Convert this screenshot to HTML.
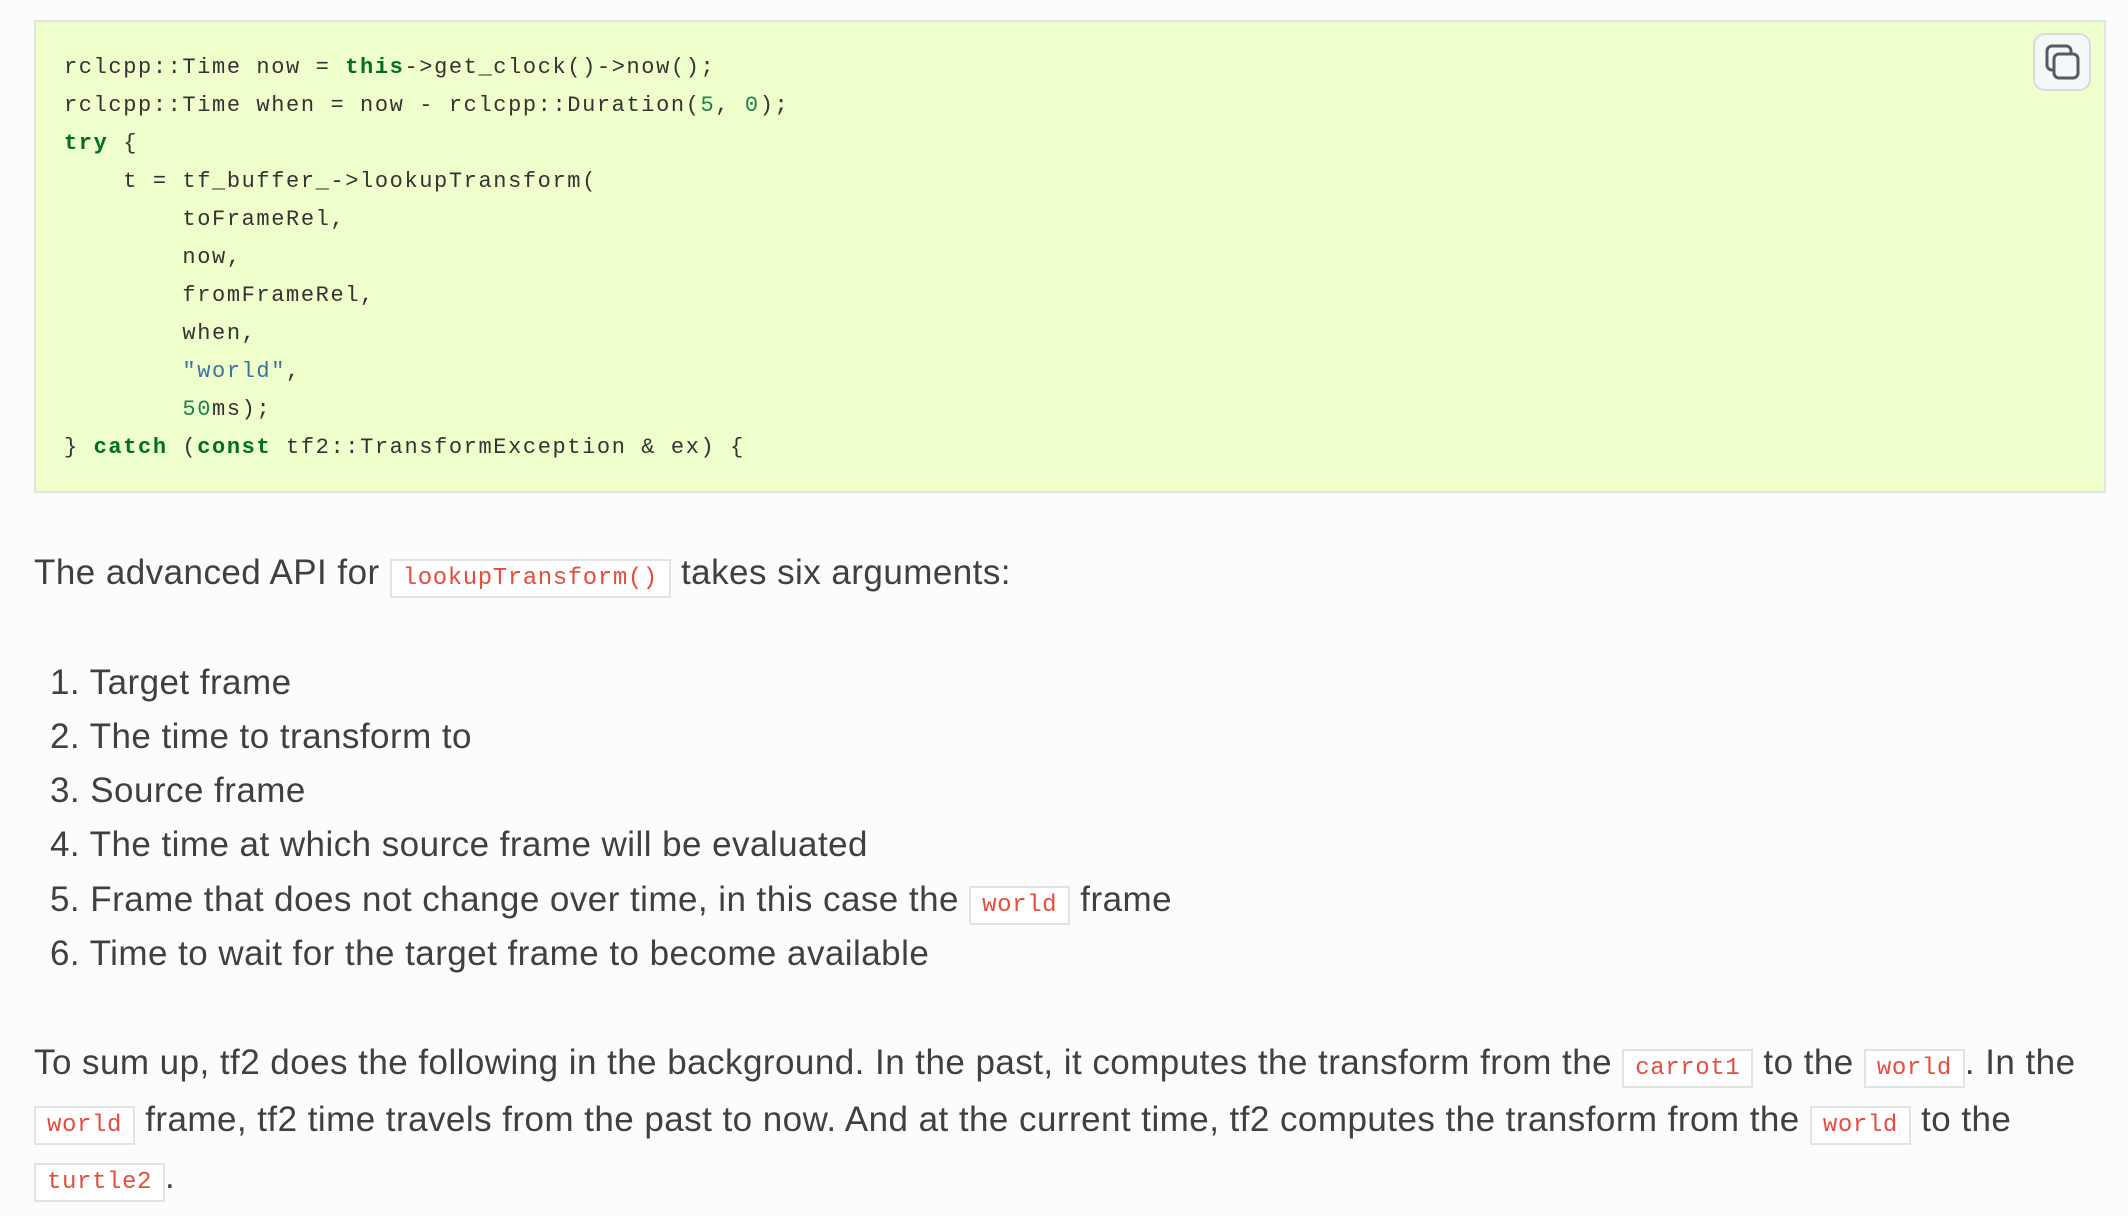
<!DOCTYPE html>
<html><head><meta charset="utf-8"><style>
html,body{margin:0;padding:0;background:#fcfcfc;width:2128px;height:1216px;overflow:hidden}
body{font-family:"Liberation Sans",sans-serif;color:#404040}
.code{position:absolute;left:34px;top:20px;width:2072px;height:473px;background:#eeffcc;border:2px solid #e1e4e5;box-sizing:border-box}
.cl{position:absolute;left:64px;font-family:"Liberation Mono",monospace;font-size:22px;letter-spacing:1.6px;color:#333;white-space:pre;line-height:38px}
.k{color:#007020;font-weight:bold}.n{color:#208050}.s{color:#4070a0}
.copy{position:absolute;left:2033px;top:33px;width:58px;height:58px;border:2px solid #d8dadd;border-radius:12px;background:#f6f7f9;box-sizing:border-box}
.t{position:absolute;font-size:35px;letter-spacing:0.45px;white-space:nowrap;line-height:50px}
code{font-family:"Liberation Mono",monospace;font-size:24px;color:#e74c3c;background:#fff;border:2px solid #e1e4e5;padding:4px 11px;letter-spacing:0.6px}
</style></head><body>
<div class="code"></div>
<div class="cl" style="top:49px">rclcpp::Time now = <span class="k">this</span>-&gt;get_clock()-&gt;now();</div>
<div class="cl" style="top:87px">rclcpp::Time when = now - rclcpp::Duration(<span class="n">5</span>, <span class="n">0</span>);</div>
<div class="cl" style="top:125px"><span class="k">try</span> {</div>
<div class="cl" style="top:163px">    t = tf_buffer_-&gt;lookupTransform(</div>
<div class="cl" style="top:201px">        toFrameRel,</div>
<div class="cl" style="top:239px">        now,</div>
<div class="cl" style="top:277px">        fromFrameRel,</div>
<div class="cl" style="top:315px">        when,</div>
<div class="cl" style="top:353px">        <span class="s">"world"</span>,</div>
<div class="cl" style="top:391px">        <span class="n">50</span>ms);</div>
<div class="cl" style="top:429px">} <span class="k">catch</span> (<span class="k">const</span> tf2::TransformException &amp; ex) {</div>
<div class="copy"><svg width="54" height="54" viewBox="0 0 54 54" style="position:absolute;left:0;top:0"><rect x="12" y="11" width="24" height="24" rx="5" fill="none" stroke="#555b63" stroke-width="3"/><rect x="19" y="19" width="24" height="24" rx="5" fill="#f6f7f9" stroke="#555b63" stroke-width="3"/></svg></div>
<div class="t" style="left:34px;top:548px">The advanced API for <code>lookupTransform()</code> takes six arguments:</div>
<div class="t" style="left:50px;top:658px">1. Target frame</div>
<div class="t" style="left:50px;top:712px">2. The time to transform to</div>
<div class="t" style="left:50px;top:766px">3. Source frame</div>
<div class="t" style="left:50px;top:820px">4. The time at which source frame will be evaluated</div>
<div class="t" style="left:50px;top:875px">5. Frame that does not change over time, in this case the <code>world</code> frame</div>
<div class="t" style="left:50px;top:929px">6. Time to wait for the target frame to become available</div>
<div class="t" style="left:34px;top:1038px">To sum up, tf2 does the following in the background. In the past, it computes the transform from the <code>carrot1</code> to the <code>world</code>. In the</div>
<div class="t" style="left:34px;top:1095px"><code>world</code> frame, tf2 time travels from the past to now. And at the current time, tf2 computes the transform from the <code>world</code> to the</div>
<div class="t" style="left:34px;top:1152px"><code>turtle2</code>.</div>
</body></html>
